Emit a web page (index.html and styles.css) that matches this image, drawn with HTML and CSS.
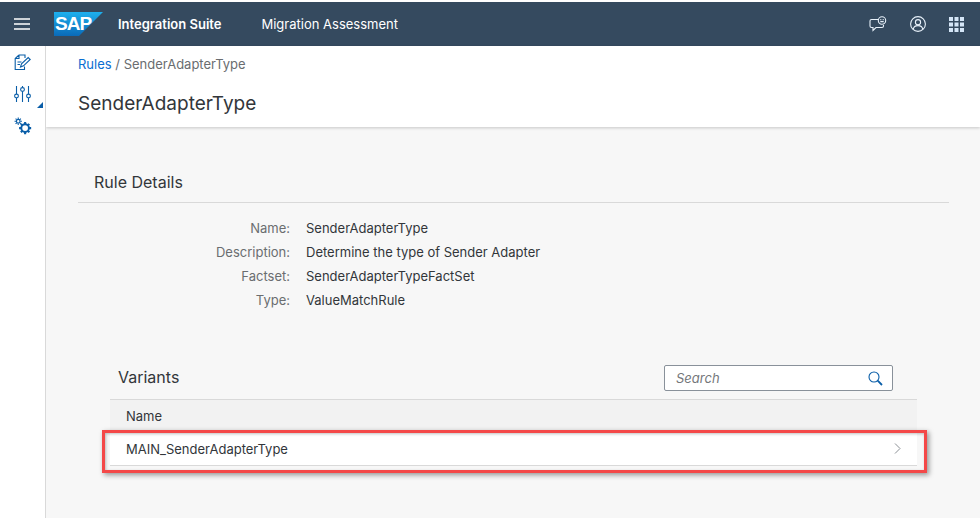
FILE: index.html
```html
<!DOCTYPE html>
<html lang="en">
<head>
    <meta charset="UTF-8">
    <meta name="viewport" content="width=device-width, initial-scale=1.0">
    <title>SenderAdapterType</title>
    <link rel="stylesheet" href="styles.css">
</head>
<body>
    <header class="shell-bar">
        <button class="menu-btn" aria-label="Menu">
            <svg width="16" height="12" viewBox="0 0 16 12"><path d="M0 1h16M0 6h16M0 11h16" stroke="#fff" stroke-width="1.6"/></svg>
        </button>
        <svg class="sap-logo" width="49" height="24" viewBox="0 0 49 24">
            <defs>
                <linearGradient id="sapBlue" x1="0" y1="0" x2="0" y2="1">
                    <stop offset="0" stop-color="#1eb0ee"/>
                    <stop offset="1" stop-color="#0a6ab8"/>
                </linearGradient>
            </defs>
            <path d="M0 0h49L25 24H0z" fill="url(#sapBlue)"/>
            <text x="1" y="18" class="sap-logo-text">SAP</text>
        </svg>
        <span class="product-name">Integration Suite</span>
        <span class="app-name">Migration Assessment</span>
        <div class="shell-actions">
            <svg width="18" height="16" viewBox="0 0 18 16" fill="none" stroke="#e8f1fa" stroke-width="1.1">
                <path d="M9 3.500H2.500a1.500 1.500 0 0 0-1.500 1.500v5a1.500 1.500 0 0 0 1.500 1.500H4v3l3-3h6a1.500 1.500 0 0 0 1.500-1.500V9"/>
                <circle cx="13" cy="4.500" r="3.700"/>
                <path d="M11.300 3.600h1M13.700 3.600h1M11.300 5.600h3.400"/>
            </svg>
            <svg width="16" height="16" viewBox="0 0 16 16" fill="none" stroke="#e8f1fa" stroke-width="1.1">
                <circle cx="8" cy="8" r="7.400"/>
                <circle cx="8" cy="6.200" r="2.600"/>
                <path d="M3.200 13.400c.4-2.600 2.400-3.800 4.800-3.800s4.400 1.200 4.800 3.800"/>
            </svg>
            <svg width="15" height="15" viewBox="0 0 15 15" fill="#d5e6f7">
                <path d="M0 0h4v4H0zM5.500 0h4v4h-4zM11 0h4v4h-4zM0 5.500h4v4H0zM5.500 5.500h4v4h-4zM11 5.500h4v4h-4zM0 11h4v4H0zM5.500 11h4v4h-4zM11 11h4v4h-4z"/>
            </svg>
        </div>
    </header>

    <div class="layout">
        <nav class="side-nav">
            <svg width="17" height="17" viewBox="0 0 17 17" fill="none" stroke="#0a5ea8" stroke-width="1.1">
                <path d="M5 1h6v3M5 1 1.200 4.500v11h9.300v-3M5 1v3.500H1.200"/>
                <path d="M3.500 8h4M3.500 10.500h2.500"/>
                <path d="M6.500 13l1-3.200 6.700-6.300 2 2-6.700 6.300z"/>
            </svg>
            <svg width="17" height="18" viewBox="0 0 17 18" fill="none" stroke="#0a5ea8" stroke-width="1.1">
                <path d="M2.500 1v8M2.500 13v4M8.500 1v1.500M8.500 6.500V17M14.500 1v8M14.500 13v4"/>
                <circle cx="2.500" cy="11" r="1.900"/>
                <circle cx="8.500" cy="4.500" r="1.900"/>
                <circle cx="14.500" cy="11" r="1.900"/>
            </svg>
            <svg width="18" height="18" viewBox="0 0 17 17" fill="none" stroke="#0a5ea8">
                <circle cx="4" cy="4" r="1.700" stroke-width="1.100"/>
                <path d="M4 .5v1.500M4 6v1.500M.5 4H2M6 4h1.500M1.500 1.500l1 1M5.500 5.500l1 1M6.500 1.500l-1 1M2.500 5.500l-1 1" stroke-width="1"/>
                <circle cx="10.500" cy="10.500" r="3.600" stroke-width="1.800"/>
                <path d="M10.500 4.800v2M10.500 14.200v2M4.800 10.500h2M14.200 10.500h2M6.500 6.500l1.400 1.400M13.100 13.100l1.400 1.400M14.500 6.500l-1.400 1.400M7.900 13.100l-1.400 1.400" stroke-width="2"/>
            </svg>
            <span class="expand-marker"></span>
        </nav>

        <main class="content">
            <section class="page-head">
                <div class="breadcrumb"><a href="#">Rules</a> / SenderAdapterType</div>
                <h1>SenderAdapterType</h1>
            </section>

            <section class="page-body">
                <h2 class="details-title">Rule Details</h2>
                <dl class="details">
                    <dt>Name:</dt><dd>SenderAdapterType</dd>
                    <dt>Description:</dt><dd>Determine the type of Sender Adapter</dd>
                    <dt>Factset:</dt><dd>SenderAdapterTypeFactSet</dd>
                    <dt>Type:</dt><dd>ValueMatchRule</dd>
                </dl>

                <div class="variants">
                    <div class="variants-head">
                        <h2>Variants</h2>
                        <div class="search">
                            <span>Search</span>
                            <svg width="15" height="15" viewBox="0 0 15 15" fill="none" stroke="#0a5ea8">
                                <circle cx="6" cy="6" r="5" stroke-width="1.100"/>
                                <path d="M9.700 9.700 14 14" stroke-width="1.800"/>
                            </svg>
                        </div>
                    </div>
                    <div class="table-head">Name</div>
                    <div class="table-row">
                        MAIN_SenderAdapterType
                        <svg width="7" height="11" viewBox="0 0 7 11" fill="none" stroke="#8a8f94"><path d="M1 .5 6 5.500 1 10.500"/></svg>
                        <div class="callout"></div>
                    </div>
                </div>
            </section>
        </main>
    </div>
</body>
</html>
```

FILE: styles.css
```css
* {
    box-sizing: border-box;
}
html, body {
    height: 100%;
}
body {
    margin: 0;
    padding-top: 2px;
    background-color: #fff;
    font-family: Inter, Arial, sans-serif;
    font-size: 13px;
    color: #32363a;
    overflow: hidden;
    display: flex;
    flex-direction: column;
}
.shell-bar {
    height: 44px;
    flex: none;
    display: flex;
    align-items: center;
    background-color: #354a5f;
    color: #fff;
}
.menu-btn {
    width: 46px;
    height: 44px;
    padding: 0 0 0 14px;
    background: none;
    border: none;
    display: flex;
    align-items: center;
}
.sap-logo {
    margin-left: 8px;
}
.sap-logo-text {
    font-family: "Liberation Sans", Arial, sans-serif;
    font-size: 19px;
    font-weight: 700;
    fill: #fff;
    letter-spacing: -1px;
}
.product-name {
    margin-left: 15px;
    font-size: 13px;
    font-weight: 600;
}
.app-name {
    margin-left: 40px;
    font-size: 13px;
}
.shell-actions {
    margin-left: auto;
    padding-right: 16px;
    display: flex;
    align-items: center;
    gap: 23px;
}
.layout {
    flex: 1;
    display: flex;
}
.side-nav {
    position: relative;
    width: 46px;
    flex: none;
    padding: 8px 0 0 14px;
    display: flex;
    flex-direction: column;
    gap: 14px;
    background-color: #fff;
    border-right: 1px solid #d9d9d9;
}
.expand-marker {
    position: absolute;
    left: 37px;
    top: 56px;
    border-style: solid;
    border-width: 0 0 6px 6px;
    border-color: transparent transparent #0a5ea8 transparent;
}
.content {
    flex: 1;
    display: flex;
    flex-direction: column;
    background-color: #f7f7f7;
}
.page-head {
    height: 81px;
    padding: 10px 32px 0;
    background-color: #fff;
    box-shadow: 0 1px 3px rgba(0,0,0,0.2);
}
.breadcrumb {
    color: #6a6d70;
    line-height: 16px;
}
.breadcrumb a {
    color: #0a6ed1;
    text-decoration: none;
}
h1 {
    margin: 18px 0 0;
    font-size: 19px;
    font-weight: 400;
    line-height: 27px;
}
.page-body {
    padding: 44px 31px 0 32px;
}
.details-title {
    margin: 0;
    padding: 0 16px 9px;
    font-size: 16px;
    font-weight: 400;
    line-height: 22px;
    border-bottom: 1px solid #d9d9d9;
}
.details {
    margin: 16px 0 0;
    display: grid;
    grid-template-columns: 212px 1fr;
    column-gap: 16px;
    row-gap: 6px;
    line-height: 18px;
}
.details dt {
    text-align: right;
    color: #6a6d70;
}
.details dd {
    margin: 0;
}
.variants {
    margin: 56px 0 0 32px;
    width: 807px;
}
.variants-head {
    height: 34px;
    padding: 0 24px 0 8px;
    display: flex;
    align-items: flex-start;
    justify-content: space-between;
}
.variants-head h2 {
    margin: 0;
    font-size: 16px;
    font-weight: 400;
    line-height: 24px;
}
.search {
    width: 229px;
    height: 26px;
    padding: 0 9px 0 11px;
    display: flex;
    align-items: center;
    justify-content: space-between;
    background-color: #fff;
    border: 1px solid #89919a;
    border-radius: 2px;
    font-style: italic;
    color: #74777a;
}
.table-head {
    height: 33px;
    padding-left: 16px;
    display: flex;
    align-items: center;
    background-color: #f2f2f2;
    border-top: 1px solid #d9d9d9;
}
.table-row {
    position: relative;
    height: 34px;
    padding: 0 16px;
    display: flex;
    align-items: center;
    justify-content: space-between;
    background-color: #fff;
    border-bottom: 1px solid #d9d9d9;
}
.callout {
    position: absolute;
    left: -8px;
    top: -2px;
    width: 825px;
    height: 43px;
    border: 3px solid #f44848;
    box-shadow: 2px 2px 5px rgba(0,0,0,0.4), inset 1px 1px 3px rgba(0,0,0,0.25);
}
```
